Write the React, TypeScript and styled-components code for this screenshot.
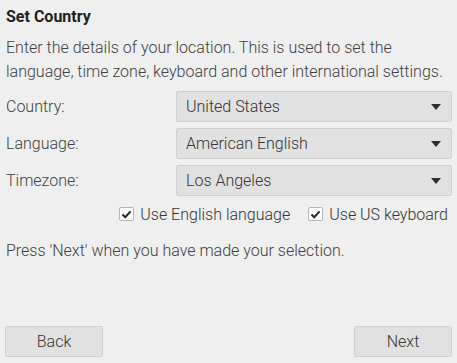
import styled, { createGlobalStyle } from 'styled-components';

const GlobalStyle = createGlobalStyle`
  html, body {
    margin: 0;
    padding: 0;
    background: #efefef;
  }
  * {
    box-sizing: border-box;
  }
`;

interface ComboProps {
  label: string;
  value: string;
}

const Combo = ({ label, value }: ComboProps) => (
  <>
    <FieldLabel>{label}</FieldLabel>
    <Select>
      <span>{value}</span>
      <Arrow viewBox="0 0 10 6">
        <path d="M0 0 L10 0 L5 6 Z" fill="#2e2e2e" />
      </Arrow>
    </Select>
  </>
);

const Check = ({ label }: { label: string }) => (
  <CheckLabel>
    <Box>
      <svg width="11" height="11" viewBox="0 0 11 11">
        <path d="M1.5 5.6 L4.2 8.3 L9.6 2.4" fill="none" stroke="#2a2a2a" strokeWidth="2.1" />
      </svg>
    </Box>
    {label}
  </CheckLabel>
);

export default function App() {
  return (
    <>
      <GlobalStyle />
      <Window>
        <Title>Set Country</Title>
        <Intro>
          Enter the details of your location. This is used to set the
          <br />
          language, time zone, keyboard and other international settings.
        </Intro>
        <Form>
          <Combo label="Country:" value="United States" />
          <Combo label="Language:" value="American English" />
          <Combo label="Timezone:" value="Los Angeles" />
        </Form>
        <CheckRow>
          <Check label="Use English language" />
          <Check label="Use US keyboard" />
        </CheckRow>
        <Hint>Press 'Next' when you have made your selection.</Hint>
        <Buttons>
          <Button>Back</Button>
          <Button>Next</Button>
        </Buttons>
      </Window>
    </>
  );
}

const Window = styled.div`
  width: 457px;
  height: 363px;
  display: flex;
  flex-direction: column;
  padding: 7px 5px 6px 5px;
  background: #efefef;
  color: #404040;
  font-family: Roboto, 'Liberation Sans', sans-serif;
  font-weight: 300;
  font-size: 16px;
`;

const Title = styled.div`
  font-weight: bold;
  font-size: 16px;
  line-height: 20px;
  color: #222;
  padding-left: 1px;
`;

const Intro = styled.p`
  margin: 9px 0 0 1px;
  line-height: 24px;
`;

const Form = styled.div`
  display: grid;
  grid-template-columns: 1fr 276px;
  grid-auto-rows: 31px;
  row-gap: 6px;
  margin-top: 7px;
`;

const FieldLabel = styled.div`
  display: flex;
  align-items: center;
  padding-left: 1px;
`;

const Select = styled.div`
  display: flex;
  align-items: center;
  justify-content: space-between;
  padding: 0 10px 0 9px;
  background: #e1e1e1;
  border: 1px solid #d0d0d0;
  border-radius: 2px;
  color: #333;
`;

const Arrow = styled.svg`
  width: 10px;
  height: 6px;
`;

const CheckRow = styled.div`
  display: flex;
  justify-content: flex-end;
  gap: 18px;
  height: 24px;
  margin-top: 6px;
  padding-right: 4px;
`;

const CheckLabel = styled.label`
  display: flex;
  align-items: center;
  gap: 6px;
  color: #333;
`;

const Box = styled.span`
  width: 15px;
  height: 14px;
  display: flex;
  align-items: center;
  justify-content: center;
  background: #fff;
  border: 1px solid #b4b4b4;
  border-radius: 2px;
`;

const Hint = styled.p`
  margin: 13px 0 0 1px;
  line-height: 24px;
`;

const Buttons = styled.div`
  margin-top: auto;
  display: flex;
  justify-content: space-between;
`;

const Button = styled.button`
  width: 98px;
  height: 31px;
  background: #e1e1e1;
  border: 1px solid #d0d0d0;
  border-radius: 2px;
  font-family: inherit;
  font-weight: 300;
  font-size: 16px;
  color: #333;
  padding: 0;
`;
